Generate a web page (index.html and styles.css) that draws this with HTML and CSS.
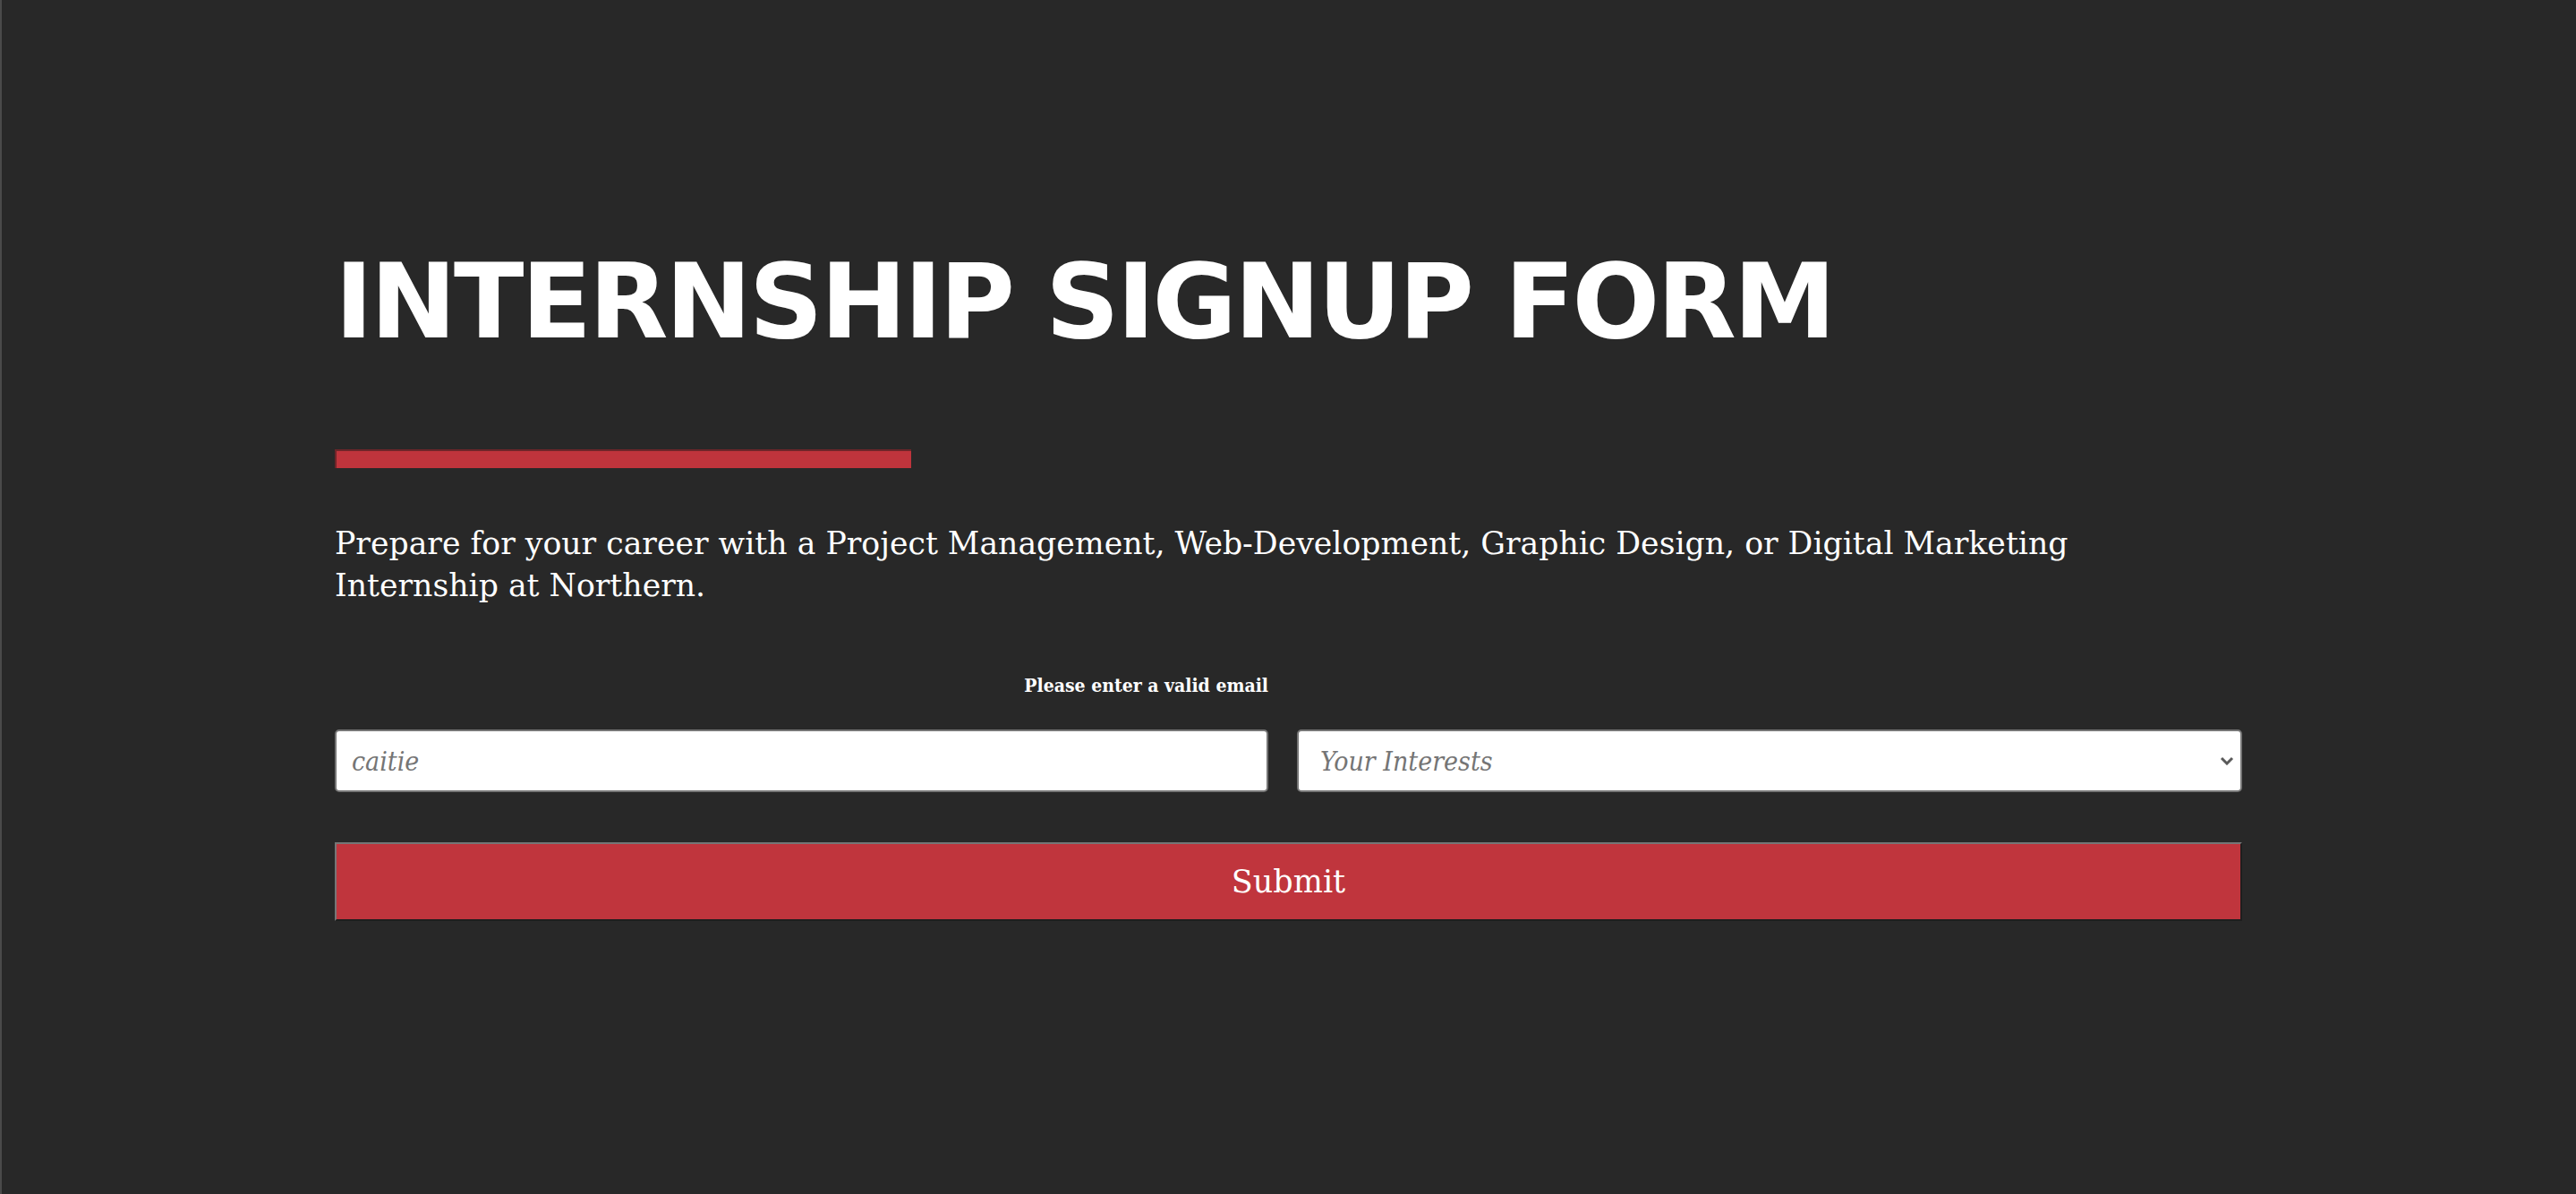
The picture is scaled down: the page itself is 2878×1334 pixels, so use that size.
FILE: index.html
```html
<!DOCTYPE html>
<html lang="en">
<head>
<meta charset="utf-8">
<title>Internship Signup Form</title>
<link rel="stylesheet" href="styles.css">
</head>
<body>
<main class="page">
  <h1 class="title">INTERNSHIP SIGNUP FORM</h1>
  <div class="rule"></div>
  <p class="lead">Prepare for your career with a Project Management, Web-Development, Graphic Design, or Digital Marketing Internship at Northern.</p>
  <form class="form">
    <div class="fields">
      <span class="hint">Please enter a valid email</span>
      <input class="input" type="email" placeholder="caitie">
      <div class="select-wrap">
        <select class="select">
          <option>Your Interests</option>
          <option>Project Management</option>
          <option>Web-Development</option>
          <option>Graphic Design</option>
          <option>Digital Marketing</option>
        </select>
        <svg class="chevron" width="16" height="10" viewBox="0 0 16 10" aria-hidden="true"><path d="M2 2 L8 8 L14 2" fill="none" stroke="#5a5a5a" stroke-width="3"/></svg>
      </div>
    </div>
    <button class="submit" type="button">Submit</button>
  </form>
</main>
</body>
</html>
```
FILE: styles.css
```css
html, body {
  margin: 0;
  padding: 0;
}
body {
  background: #282828;
  border-left: 2px solid #4a4a4a;
  min-height: 100vh;
  box-sizing: border-box;
  color: #ffffff;
  font-family: "DejaVu Serif", serif;
}
.page {
  width: 2131px;
  padding: 280px 0 0 372px;
}
.title {
  margin: 0;
  font-family: "DejaVu Sans", sans-serif;
  font-weight: 700;
  font-size: 115px;
  line-height: 115px;
  letter-spacing: -3px;
  color: #ffffff;
}
.rule {
  margin-top: 107px;
  width: 644px;
  height: 21px;
  box-sizing: border-box;
  background: #bf343c;
  border-top: 2px solid #6e2529;
  border-left: 2px solid #6e2529;
}
.lead {
  margin: 61px 0 0;
  max-width: 2080px;
  font-size: 34.7px;
  line-height: 47px;
  color: #ffffff;
}
.form {
  margin-top: 73px;
}
.fields {
  display: grid;
  grid-template-columns: 1043px 1fr;
  column-gap: 32px;
  row-gap: 34px;
}
.hint {
  grid-column: 1;
  text-align: right;
  font-weight: 700;
  font-size: 21px;
  line-height: 30px;
  font-stretch: condensed;
}
.input,
.select {
  grid-row: 2;
  box-sizing: border-box;
  width: 100%;
  height: 70px;
  margin: 0;
  background: #ffffff;
  border: 2px solid #767676;
  border-radius: 5px;
  font-family: "DejaVu Serif", serif;
  font-style: italic;
  font-stretch: condensed;
  font-size: 30px;
  color: #757575;
  outline: none;
}
.input {
  grid-column: 1;
  padding: 0 17px;
}
.input::placeholder {
  color: #757575;
  font-style: italic;
}
.select-wrap {
  grid-column: 2;
  grid-row: 2;
  position: relative;
}
.select {
  -webkit-appearance: none;
  appearance: none;
  padding: 0 40px 0 24px;
}
.chevron {
  position: absolute;
  right: 9px;
  top: 30px;
  pointer-events: none;
}
.submit {
  display: block;
  margin-top: 56px;
  width: 100%;
  height: 88px;
  box-sizing: border-box;
  background: #c0353d;
  border-top: 2px solid #767676;
  border-left: 2px solid #767676;
  border-right: 2px solid #1e1e1e;
  border-bottom: 2px solid #1e1e1e;
  border-radius: 0;
  color: #ffffff;
  font-family: "DejaVu Serif", serif;
  font-size: 35px;
  padding: 0;
}
```
